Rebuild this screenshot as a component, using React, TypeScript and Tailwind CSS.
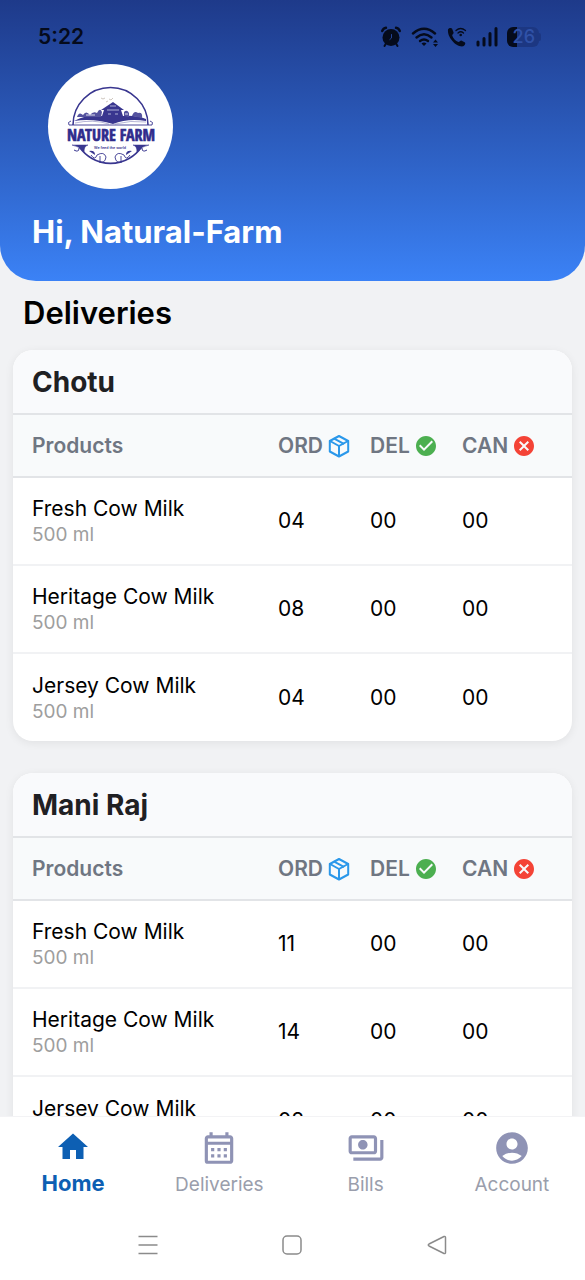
import React, { useState } from 'react';
import { IconType } from 'react-icons';
import {
  MdAccountCircle,
  MdCancel,
  MdCheckCircle,
  MdHome,
  MdOutlineCalendarMonth,
  MdOutlinePayments,
} from 'react-icons/md';

interface Product {
  name: string;
  size: string;
  ordered: string;
  delivered: string;
  cancelled: string;
}

interface Delivery {
  agent: string;
  products: Product[];
}

const deliveries: Delivery[] = [
  {
    agent: 'Chotu',
    products: [
      { name: 'Fresh Cow Milk', size: '500 ml', ordered: '04', delivered: '00', cancelled: '00' },
      { name: 'Heritage Cow Milk', size: '500 ml', ordered: '08', delivered: '00', cancelled: '00' },
      { name: 'Jersey Cow Milk', size: '500 ml', ordered: '04', delivered: '00', cancelled: '00' },
    ],
  },
  {
    agent: 'Mani Raj',
    products: [
      { name: 'Fresh Cow Milk', size: '500 ml', ordered: '11', delivered: '00', cancelled: '00' },
      { name: 'Heritage Cow Milk', size: '500 ml', ordered: '14', delivered: '00', cancelled: '00' },
      { name: 'Jersey Cow Milk', size: '500 ml', ordered: '08', delivered: '00', cancelled: '00' },
    ],
  },
];

const tabs: { label: string; icon: IconType }[] = [
  { label: 'Home', icon: MdHome },
  { label: 'Deliveries', icon: MdOutlineCalendarMonth },
  { label: 'Bills', icon: MdOutlinePayments },
  { label: 'Account', icon: MdAccountCircle },
];

const BoxIcon = () => (
  <svg
    className="size-6 shrink-0"
    viewBox="0 0 24 24"
    fill="none"
    stroke="#2b98ea"
    strokeWidth="2"
    strokeLinejoin="round"
    strokeLinecap="round"
  >
    <path d="M12 2 21.2 7V17.5L12 22.5 2.8 17.5V7Z" />
    <path d="M3 7 12 12 21 7M12 12V22" />
    <path d="M7.2 4.7 16.4 9.6" />
  </svg>
);

const StatusIcons = () => (
  <div className="flex items-center gap-2 text-[#050b1c]">
    {/* alarm */}
    <svg className="h-6 w-6" viewBox="0 0 24 24" fill="none" stroke="currentColor" strokeLinecap="round">
      <circle cx="12" cy="12.5" r="8.5" fill="currentColor" stroke="none" />
      <path d="M3.2 6Q4.2 3.2 7 2.8M20.8 6Q19.8 3.2 17 2.8" strokeWidth="2.4" />
      <path d="M7 18.5 5.5 21M17 18.5 18.5 21" strokeWidth="2" />
      <path d="M12.5 9.5V13L10.8 14.5" stroke="#23439a" strokeWidth="1" />
    </svg>
    {/* wifi */}
    <svg className="h-6 w-7" viewBox="0 0 28 24" fill="none" stroke="currentColor" strokeLinecap="round">
      <path d="M2 8.5Q13 -1 24 8.5" strokeWidth="2.4" />
      <path d="M5.5 12.5Q13 6 20.5 12.5" strokeWidth="2.4" />
      <path d="M9 16Q13 12.8 17 16" strokeWidth="2.4" />
      <path d="M10.5 18.5Q13 16.5 15.5 18.5L13 21Z" fill="currentColor" stroke="none" />
      <path d="M22 17.5 24.5 14.5 27 17.5ZM22 19 24.5 22 27 19Z" fill="currentColor" stroke="none" />
    </svg>
    {/* call over wifi */}
    <svg className="h-6 w-5" viewBox="0 0 20 24" fill="none" stroke="currentColor" strokeLinecap="round">
      <path
        d="M1 4.5C2 3 4 2.6 5 3.6L6.6 7.6C6.8 8.6 5.4 9.4 5.2 10.4C6 13 8.5 16 11.5 17C12.6 17 13 15.6 14.3 15.6L18 17.6C18.8 18.8 17.8 20.6 16.2 21.3C9 22.5 0 12 1 4.5Z"
        fill="currentColor"
        stroke="none"
      />
      <path d="M9 5.5Q13.5 1.5 18.5 5.5M11 8Q13.7 5.6 16.5 8" strokeWidth="1.3" />
      <circle cx="13.7" cy="10" r="1.3" fill="currentColor" stroke="none" />
    </svg>
    {/* signal */}
    <svg className="h-6 w-6" viewBox="0 0 24 24" fill="none" stroke="currentColor" strokeWidth="3" strokeLinecap="round">
      <path d="M3 17V20M9 13.5V20M15 8.5V20M21 3.5V20" />
    </svg>
    <div className="flex items-center">
      <div className="flex h-5 w-8 items-center justify-end rounded-md bg-linear-to-r from-[#050b1c] from-30% to-[#1c3782] to-30% pr-1">
        <span className="text-lg font-medium text-[#3052a8]">26</span>
      </div>
      <div className="h-2 w-0.5 rounded-r bg-[#1c3782]" />
    </div>
  </div>
);

const Logo = () => (
  <svg className="size-[125px] rounded-full bg-white" viewBox="0 0 125 125" fill="none" stroke="#39368f">
    <path d="M25 61A37.5 37.5 0 0 1 100 61" strokeWidth="1.6" />
    <path d="M31.5 83A37.5 37.5 0 0 0 93.5 83" strokeWidth="1.6" />
    {/* birds */}
    <path d="M53 34 55 35 57 34M58 38 60 37M61 35 63 36 65 34" strokeWidth="0.7" stroke="#b9aea2" />
    {/* hills, trees and the barn */}
    <path
      d="M26 57Q40 50 54 52L56 46H53L65 38 76 46H73L75 52Q88 51 98 55V57Q80 54 65 60Q45 54 26 57Z"
      fill="#39368f"
      stroke="none"
    />
    <path d="M59 46H71M60 50H63M67 50H70M62 42H68" stroke="#aeb0d5" />
    <path
      d="M29 53Q31 47 35 51Q38 46 42 51Q45 47 49 49Q52 43 54 48L53 53ZM76 52V48Q79 45 81 49L81 53ZM84 52Q86 46 90 49Q95 48 94 54Z"
      fill="#55539f"
      stroke="none"
    />
    <path d="M38 51H47M77 50H80" stroke="#dfe0f0" />
    <path d="M27 59Q45 55 61 60M98 58Q83 56 67 60" strokeWidth="0.6" stroke="#8684ba" />
    {/* frame scrolls */}
    <path d="M23 57Q19 58 21 61H104Q106 58 102 57" strokeWidth="0.9" />
    <path
      d="M24 81H40Q36 82 36 88Q31 82 24 81ZM85 81H101Q94 82 89 88Q89 82 85 81Z"
      fill="#39368f"
      strokeWidth="0.5"
    />
    <path d="M31 84Q31 89 26 86M94 84Q94 89 99 86" />
    <path
      d="M43 91Q47 97 49 91Q56 87 58 93Q57 100 51 98M52 92V97M82 91Q78 97 76 91Q69 87 67 93Q68 100 74 98M73 92V97"
      strokeWidth="0.9"
    />
    <path d="M41 87Q47 86 47 91ZM84 87Q78 86 78 91Z" fill="#39368f" stroke="none" />
    <text
      x="63"
      y="77"
      textAnchor="middle"
      fill="#2f2c8c"
      stroke="#2f2c8c"
      strokeWidth="0.6"
      className="font-['Liberation_Sans_Narrow','Open_Sans_Condensed',Roboto,sans-serif] text-[16px] font-bold"
    >
      NATURE FARM
    </text>
    <text
      x="62"
      y="85"
      textAnchor="middle"
      fill="#39368f"
      stroke="none"
      className="font-['Roboto',sans-serif] text-[4px] font-medium"
    >
      We feed the world
    </text>
  </svg>
);

const DeliveryCard: React.FC<{ delivery: Delivery }> = ({ delivery }) => (
  <section className="overflow-hidden rounded-[20px] bg-white shadow-[0_2px_10px_rgba(0,0,0,0.07)]">
    <h2 className="border-b-2 border-[#e2e4e7] bg-[#f9fafc] px-[19px] pt-3 pb-[11px] text-[28px] leading-10 font-bold text-[#1f2023]">
      {delivery.agent}
    </h2>
    <table className="w-full table-fixed text-left">
      <thead className="bg-[#f8fafb] text-[21px] text-[#6f7682]">
        <tr className="h-[62px] border-b-2 border-[#e2e4e7]">
          <th className="pl-[19px] font-semibold">Products</th>
          <th className="w-[92px] font-semibold">
            <span className="flex items-center gap-1">ORD <BoxIcon /></span>
          </th>
          <th className="w-[92px] font-semibold">
            <span className="flex items-center gap-1">DEL <MdCheckCircle className="size-6 shrink-0 text-[#4caf50]" /></span>
          </th>
          <th className="w-[110px] font-semibold">
            <span className="flex items-center gap-1">CAN <MdCancel className="size-6 shrink-0 text-[#f44336]" /></span>
          </th>
        </tr>
      </thead>
      <tbody className="text-[21px] text-black">
        {delivery.products.map((product) => (
          <tr key={product.name} className="h-[88px] border-b-2 border-[#f1f2f4] last:border-b-0">
            <td className="pl-[19px]">
              <div className="leading-7">{product.name}</div>
              <div className="text-[19px] leading-6 text-[#9e9e9e]">{product.size}</div>
            </td>
            <td>{product.ordered}</td>
            <td>{product.delivered}</td>
            <td>{product.cancelled}</td>
          </tr>
        ))}
      </tbody>
    </table>
  </section>
);

const App: React.FC = () => {
  const [active, setActive] = useState('Home');

  return (
    <div className="flex h-screen flex-col bg-[#f1f2f4] font-['Inter',sans-serif]">
      {/* Header */}
      <header className="rounded-b-[36px] bg-linear-to-b from-[#1e3a8a] to-[#3b82f6] px-8 pt-[25px] pb-[29px]">
        <div className="flex h-6 items-center justify-between pr-3 pl-1.5">
          <span className="text-[21px] font-semibold text-[#050b1c]">5:22</span>
          <StatusIcons />
        </div>
        <div className="px-4 pt-[15px]">
          <Logo />
        </div>
        <h1 className="mt-[23px] text-[31px] leading-10 font-bold text-white">Hi, Natural-Farm</h1>
      </header>

      {/* Deliveries */}
      <main className="min-h-0 flex-1 overflow-y-auto px-[13px] [scrollbar-width:none]">
        <h2 className="px-2.5 pt-3 pb-3 text-[31px] leading-10 font-semibold text-black">Deliveries</h2>
        <div className="flex flex-col gap-8 pt-[5px] pb-8">
          {deliveries.map((delivery) => (
            <DeliveryCard key={delivery.agent} delivery={delivery} />
          ))}
        </div>
      </main>

      {/* Tab bar */}
      <nav className="grid shrink-0 grid-cols-4 items-start border-t border-[#f3f3f5] bg-white pt-3 pb-8">
        {tabs.map(({ label, icon: Icon }) => (
          <button
            key={label}
            type="button"
            onClick={() => setActive(label)}
            className={`flex cursor-pointer flex-col items-center leading-9 ${
              active === label ? 'text-[22px] font-bold text-[#0d5fb3]' : 'text-[19px] text-[#9a9eac]'
            }`}
          >
            <Icon className={active === label ? 'size-9' : 'size-[38px] text-[#8f93b5]'} />
            <span>{label}</span>
          </button>
        ))}
      </nav>

      {/* System buttons */}
      <div className="grid shrink-0 grid-cols-3 justify-items-center bg-white px-[13%] pb-[25px] text-[#8b8b8b]">
        <button type="button" aria-label="Recent apps">
          <svg className="size-5" viewBox="0 0 20 20" fill="none" stroke="currentColor" strokeWidth="1.5">
            <path d="M0.5 1.5H19.5M0.5 10H19.5M0.5 18.5H19.5" />
          </svg>
        </button>
        <button type="button" aria-label="Home screen">
          <svg className="size-5" viewBox="0 0 20 20" fill="none" stroke="currentColor" strokeWidth="1.5">
            <rect x="1" y="1" width="18" height="18" rx="4" />
          </svg>
        </button>
        <button type="button" aria-label="Back">
          <svg className="size-5" viewBox="0 0 20 20" fill="none" stroke="currentColor" strokeWidth="1.5" strokeLinejoin="round">
            <path d="M17 1.5Q18.5 1 18.5 2.5V17.5Q18.5 19 17 18.5L2 11Q0.5 10 2 9Z" />
          </svg>
        </button>
      </div>
    </div>
  );
};

export default App;
